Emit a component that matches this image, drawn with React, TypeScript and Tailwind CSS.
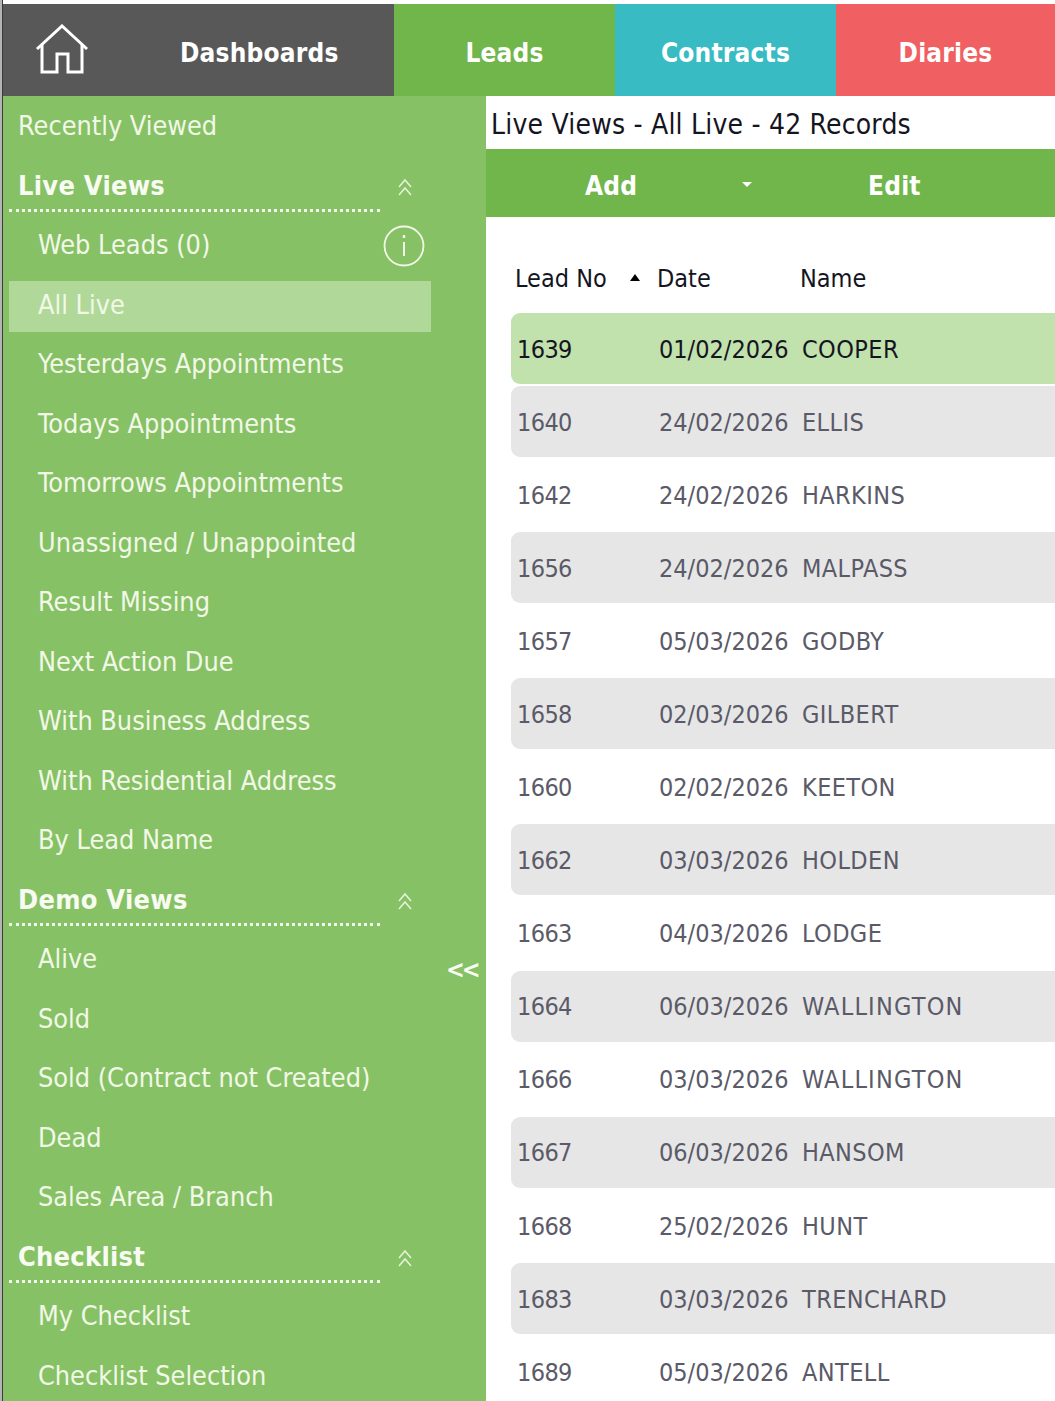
import React from "react";

const Chevrons = () => (
  <svg width="16" height="20" viewBox="0 0 16 20" fill="none" stroke="#e6f3dc" strokeWidth="1.5" className="block">
    <path d="M2 9 L8 2 L14 9" />
    <path d="M2 17 L8 10 L14 17" />
  </svg>
);

const Item = ({ label, active, info }: { label: string; active?: boolean; info?: boolean }) => (
  <div className="relative h-[59.5px] flex items-center pl-[6px]">
    <div className={`w-[422px] h-[51px] mt-[5px] flex items-center pl-[29px] pb-[3px] ${active ? "bg-[#b0d898]" : ""}`}>
      <span className="text-[26.8px] text-[#f2f8e8] whitespace-nowrap">{label}</span>
    </div>
    {info && (
      <svg width="42" height="42" viewBox="0 0 42 42" fill="none" stroke="#f2f8e8" className="absolute left-[380px] top-[10px]">
        <circle cx="21" cy="21" r="19.5" strokeWidth="1.8" />
        <path d="M21 17 V31" strokeWidth="2" />
        <path d="M21 10 V13" strokeWidth="2.4" />
      </svg>
    )}
  </div>
);

const Section = ({ label }: { label: string }) => (
  <div className="relative h-[59.5px] ml-[6px] w-[371px]">
    <div className="absolute left-0 bottom-[3px] border-b-[3px] border-dotted border-[#f4f9ee] w-[371px]" />
    <span className="absolute left-[9px] top-[11px] text-[27px] tracking-[0.25px] font-bold text-[#f7fbf1] whitespace-nowrap">{label}</span>
    <div className="absolute left-[388px] top-[23px]">
      <Chevrons />
    </div>
  </div>
);

const rows: [string, string, string][] = [
  ["1639", "01/02/2026", "COOPER"],
  ["1640", "24/02/2026", "ELLIS"],
  ["1642", "24/02/2026", "HARKINS"],
  ["1656", "24/02/2026", "MALPASS"],
  ["1657", "05/03/2026", "GODBY"],
  ["1658", "02/03/2026", "GILBERT"],
  ["1660", "02/02/2026", "KEETON"],
  ["1662", "03/03/2026", "HOLDEN"],
  ["1663", "04/03/2026", "LODGE"],
  ["1664", "06/03/2026", "WALLINGTON"],
  ["1666", "03/03/2026", "WALLINGTON"],
  ["1667", "06/03/2026", "HANSOM"],
  ["1668", "25/02/2026", "HUNT"],
  ["1683", "03/03/2026", "TRENCHARD"],
  ["1689", "05/03/2026", "ANTELL"],
];

export default function App() {
  return (
    <div className="font-['DejaVu_Sans',sans-serif] font-stretch-condensed w-[1055px] h-[1401px] overflow-hidden bg-white flex">
      <div className="w-[3px] shrink-0 bg-[#b4b4b4] border-r border-[#3a3a3a]" />
      <div className="flex-1 min-w-0 flex flex-col">
        <div className="h-[5px] shrink-0 bg-white border-b border-[#c4c4c4] -mb-[1px]" />
        <div className="h-[92px] shrink-0 flex text-white text-[26px] tracking-[0.2px] font-bold">
          <div className="w-[391px] bg-[#585858] flex items-center">
            <svg width="54" height="52" viewBox="0 0 54 52" fill="none" stroke="#fff" strokeWidth="3" className="ml-[32px]">
              <path d="M2 25 L27 2 L52 25" />
              <path d="M7 21 V48 H22 V30 H33 V48 H47 V21" />
            </svg>
            <span className="ml-[91px] pt-[6px]">Dashboards</span>
          </div>
          <div className="w-[221px] bg-[#70b64a] flex items-center justify-center pt-[6px]">Leads</div>
          <div className="w-[221px] bg-[#38bbc3] flex items-center justify-center pt-[6px]">Contracts</div>
          <div className="flex-1 bg-[#f05f62] flex items-center justify-center pt-[6px]">Diaries</div>
        </div>
        <div className="flex flex-1 min-h-0">
          <aside className="relative w-[483px] shrink-0 bg-[#87c165] overflow-hidden">
            <div className="h-[59px] flex items-center pl-[15px] pt-[2px] text-[26.8px] text-[#f2f8e8]">Recently Viewed</div>
            <Section label="Live Views" />
            <Item label="Web Leads (0)" info />
            <Item label="All Live" active />
            <Item label="Yesterdays Appointments" />
            <Item label="Todays Appointments" />
            <Item label="Tomorrows Appointments" />
            <Item label="Unassigned / Unappointed" />
            <Item label="Result Missing" />
            <Item label="Next Action Due" />
            <Item label="With Business Address" />
            <Item label="With Residential Address" />
            <Item label="By Lead Name" />
            <Section label="Demo Views" />
            <Item label="Alive" />
            <Item label="Sold" />
            <Item label="Sold (Contract not Created)" />
            <Item label="Dead" />
            <Item label="Sales Area / Branch" />
            <Section label="Checklist" />
            <Item label="My Checklist" />
            <Item label="Checklist Selection" />
            <span className="absolute left-[443px] top-[855px] text-[25px] tracking-[-3px] font-bold text-[#f7fbf1]">&lt;&lt;</span>
          </aside>
          <main className="flex-1 min-w-0 bg-white flex flex-col">
            <div className="h-[53px] shrink-0 flex items-center pl-[5px] pt-[4px] text-[28px] tracking-[0.2px] text-[#15151f] whitespace-nowrap">
              Live Views - All Live - 42 Records
            </div>
            <div className="h-[68px] shrink-0 bg-[#70b64a] relative text-white text-[26px] tracking-[0.2px] font-bold">
              <span className="absolute left-[99px] top-[18px]">Add</span>
              <span className="absolute left-[256px] top-[33px] w-0 h-0 border-l-[5px] border-r-[5px] border-t-[5px] border-l-transparent border-r-transparent border-t-white" />
              <span className="absolute left-[382px] top-[18px]">Edit</span>
            </div>
            <div className="h-[96px] shrink-0 flex items-end pb-[16px] pl-[29px] text-[25px] text-[#15151f] relative">
              <span className="w-[142px]">Lead No</span>
              <span className="w-[143px]">Date</span>
              <span>Name</span>
              <span className="absolute left-[144px] top-[57px] w-0 h-0 border-l-[5px] border-r-[5px] border-b-[7px] border-l-transparent border-r-transparent border-b-black" />
            </div>
            <div className="pl-[25px] flex flex-col">
              {rows.map((r, i) => (
                <div
                  key={r[0]}
                  className={`h-[71px] mb-[2.07px] pt-[2px] shrink-0 rounded-l-[9px] flex items-center pl-[6px] text-[25px] whitespace-nowrap ${
                    i === 0 ? "bg-[#c1e1ad] text-[#15151f]" : i % 2 === 1 ? "bg-[#e6e6e6] text-[#5a5a68]" : "text-[#5a5a68]"
                  }`}
                >
                  <span className="w-[142px] tracking-[-0.6px]">{r[0]}</span>
                  <span className="w-[143px]">{r[1]}</span>
                  <span className={r[2] === "WALLINGTON" ? "tracking-[1.2px]" : "tracking-[0.4px]"}>{r[2]}</span>
                </div>
              ))}
            </div>
          </main>
        </div>
      </div>
    </div>
  );
}
